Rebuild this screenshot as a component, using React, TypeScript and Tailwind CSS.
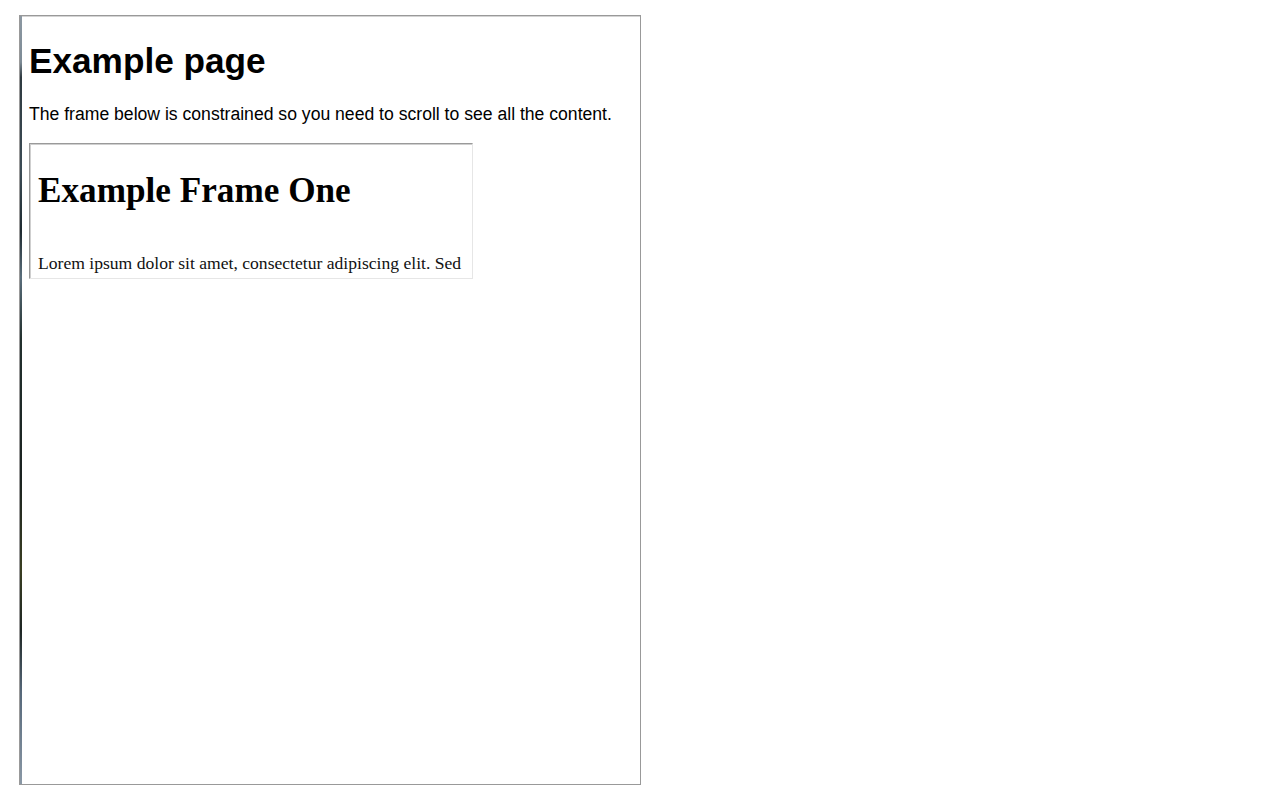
export default function App() {
  return (
    <div className="min-h-[800px] bg-white pl-[19px] pt-[15px] [font-family:'Liberation_Sans',Arial,sans-serif] text-black">
      <div className="flex h-[770px] w-[622px] border border-[#999999] bg-white">
        <div className="w-[2px] shrink-0 bg-[linear-gradient(to_bottom,#8c98a2_0%,#7d8b96_6%,#2e3a40_8%,#3c4c56_20%,#1e2a30_28%,#5a6e7c_34%,#22302e_42%,#1a2220_60%,#3a3e22_72%,#1e2624_80%,#56687a_88%,#8a98a6_100%)]" />
        <div className="flex-1 overflow-hidden border-t border-[#d4d4d4] pl-[7px]">
          <h1 className="mb-[22.6px] mt-[24px] text-[35.2px] font-bold leading-[40.5px]">
            Example page
          </h1>
          <p className="text-[17.6px] leading-[20.2px]">
            The frame below is constrained so you need to scroll to see all the content.
          </p>
          <div className="mt-[18.6px] h-[136px] w-[444px] border-l border-t border-b border-r border-l-[#9a9a9a] border-t-[#9a9a9a] border-b-[#e6e6e6] border-r-[#e6e6e6]">
            <div className="h-full w-full overflow-hidden border-l border-t border-l-[#cfcfcf] border-t-[#cfcfcf] px-[7px] [font-family:'Liberation_Serif','Times_New_Roman',serif]">
              <h1 className="mb-[42px] mt-[26px] text-[35.2px] font-bold leading-[40.5px]">
                Example Frame One
              </h1>
              <p className="whitespace-nowrap text-[17.6px] leading-[20.2px] text-[#111]">
                Lorem ipsum dolor sit amet, consectetur adipiscing elit. Sed
              </p>
            </div>
          </div>
        </div>
      </div>
    </div>
  );
}
